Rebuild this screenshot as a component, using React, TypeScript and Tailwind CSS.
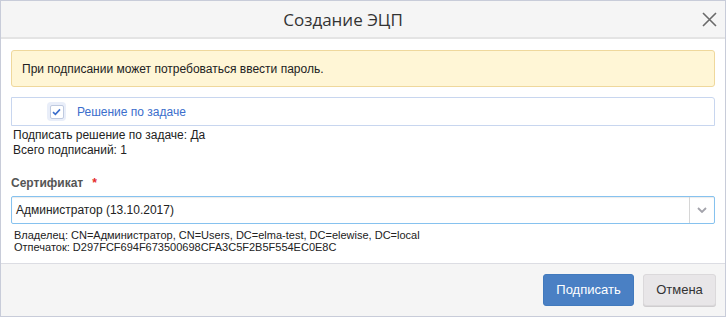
export default function App() {
  return (
    <div className="w-[726px] h-[317px] bg-white border border-[#c8ccd9] flex flex-col font-['Liberation_Sans',Arial,sans-serif] text-[#222]">
      {/* Header */}
      <div className="h-[38px] shrink-0 bg-[#f5f5f5] border-b-2 border-[#e4e4e4] flex items-center">
        <div className="flex-1 text-center font-['Open_Sans',sans-serif] text-[17px] text-[#333] leading-none pt-[1px]">
          Создание ЭЦП
        </div>
        <button className="ml-[17px] mr-[8px] w-[15px] h-[15px] flex items-center justify-center">
          <svg width="15" height="15" viewBox="0 0 15 15" fill="none">
            <path d="M1 1 L14 14 M14 1 L1 14" stroke="#6a6a6a" strokeWidth="1.6" />
          </svg>
        </button>
      </div>

      {/* Body */}
      <div className="flex-1 px-[10px] pt-[11px]">
        <div className="h-[37px] bg-[#fff6d6] border border-[#efd89c] rounded-[3px] flex items-center pl-[10px] text-[12px]">
          При подписании может потребоваться ввести пароль.
        </div>

        <div className="mt-[10px] h-[29px] border border-[#c8d6ef] rounded-tr-[3px] flex items-center pl-[35px]">
          <div className="w-[19px] h-[19px] rounded-[4px] bg-[#e9eef9] flex items-center justify-center">
            <div className="w-[14px] h-[14px] bg-white border border-[#bfcae0] rounded-[2px] flex items-center justify-center">
              <svg width="9" height="8" viewBox="0 0 9 8" fill="none">
                <path d="M1 4.2 L3.4 6.4 L8 1.4" stroke="#3b6ecc" strokeWidth="1.6" />
              </svg>
            </div>
          </div>
          <span className="ml-[11px] text-[12px] text-[#3b6ecc]">Решение по задаче</span>
        </div>

        <div className="mt-[2px] pl-[2px] text-[12px] leading-[15px]">
          <div>Подписать решение по задаче: Да</div>
          <div>Всего подписаний: 1</div>
        </div>

        <div className="mt-[17px] text-[12px] leading-[16px] font-bold text-[#555]">
          Сертификат<span className="ml-[9px] text-[#e52b2b]">*</span>
        </div>

        <div className="mt-[5px] h-[28px] border border-[#86c2ef] rounded-[2px] flex items-center shadow-[inset_0_1px_1px_rgba(0,0,0,0.08)]">
          <div className="flex-1 pl-[4px] text-[12px] text-[#222]">Администратор (13.10.2017)</div>
          <div className="w-[25px] h-full border-l border-[#d6d6d6] flex items-center justify-center">
            <svg width="10" height="6" viewBox="0 0 10 6" fill="none">
              <path d="M1 1 L5 5 L9 1" stroke="#a3a3ab" strokeWidth="1.8" />
            </svg>
          </div>
        </div>

        <div className="mt-[5px] pl-[3px] text-[11px] leading-[12px]">
          <div>Владелец: CN=Администратор, CN=Users, DC=elma-test, DC=elewise, DC=local</div>
          <div>Отпечаток: D297FCF694F673500698CFA3C5F2B5F554EC0E8C</div>
        </div>
      </div>

      {/* Footer */}
      <div className="h-[53px] shrink-0 bg-[#f5f5f5] border-t border-[#dcdde3] flex items-center justify-end gap-[9px] pr-[9px]">
        <button className="w-[91px] h-[32px] rounded-[3px] bg-[#4a80c4] border border-[#427abd] text-white text-[13px]">
          Подписать
        </button>
        <button className="w-[73px] h-[32px] rounded-[3px] bg-[#e8e6e8] border border-[#dbd9db] shadow-[0_1px_0_#cfcdcf] text-[#333] text-[13px]">
          Отмена
        </button>
      </div>
    </div>
  );
}
